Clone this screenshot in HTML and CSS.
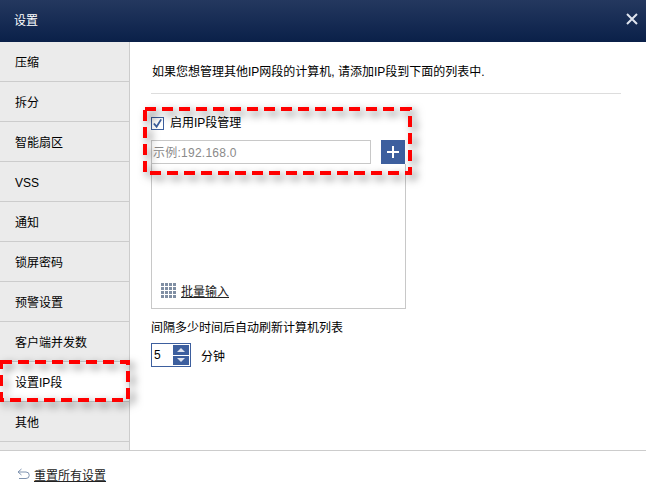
FILE: index.html
```html
<!DOCTYPE html>
<html lang="zh-CN">
<head>
<meta charset="UTF-8">
<title>设置</title>
<link rel="stylesheet" href="styles.css">
</head>
<body>
<div class="dialog">
    <header class="titlebar">
        <span class="title">设置</span>
        <svg class="close" width="12" height="12" viewBox="0 0 12 12"><path d="M1 1l10 10M11 1L1 11" stroke="#dfe4ee" stroke-width="2"/></svg>
    </header>
    <div class="middle">
        <ul class="sidebar">
            <li>压缩</li>
            <li>拆分</li>
            <li>智能扇区</li>
            <li>VSS</li>
            <li>通知</li>
            <li>锁屏密码</li>
            <li>预警设置</li>
            <li>客户端并发数</li>
            <li class="active">设置IP段</li>
            <li>其他</li>
        </ul>
        <main class="content">
            <p class="intro">如果您想管理其他IP网段的计算机, 请添加IP段到下面的列表中.</p>
            <label class="enable">
                <span class="checkbox">
                    <svg width="12" height="11" viewBox="0 0 12 11"><path d="M2 5.500l3 3.500 5-8" fill="none" stroke="#3d5f9e" stroke-width="2"/></svg>
                </span>
                <span class="enable-text">启用IP段管理</span>
            </label>
            <div class="add-row">
                <div class="ip-input">示例:192.168.0</div>
                <button class="add-btn">
                    <svg width="14" height="14" viewBox="0 0 14 14"><path d="M7 1v12M1 7h12" stroke="#fff" stroke-width="2"/></svg>
                </button>
            </div>
            <div class="ip-list">
                <div class="batch">
                    <svg width="15" height="15" viewBox="0 0 15 15" fill="#7f8ea3">
                        <path d="M0 0h3v3H0zM4 0h3v3H4zM8 0h3v3H8zM12 0h3v3h-3zM0 4h3v3H0zM4 4h3v3H4zM8 4h3v3H8zM12 4h3v3h-3zM0 8h3v3H0zM4 8h3v3H4zM8 8h3v3H8zM12 8h3v3h-3zM0 12h3v3H0zM4 12h3v3H4zM8 12h3v3H8zM12 12h3v3h-3z"/>
                    </svg>
                    <a>批量输入</a>
                </div>
            </div>
            <p class="interval">间隔多少时间后自动刷新计算机列表</p>
            <div class="spin-row">
                <div class="spin">
                    <span class="spin-value">5</span>
                    <div class="spin-btns">
                        <span class="spin-btn"><i class="arrow-up"></i></span>
                        <span class="spin-btn"><i class="arrow-down"></i></span>
                    </div>
                </div>
                <span>分钟</span>
            </div>
        </main>
    </div>
    <footer class="footer">
        <svg width="13" height="12" viewBox="0 0 13 12"><path d="M4.500 1L1 4l3.500 3M1 4h8a3 3 0 0 1 0 6.500H2" fill="none" stroke="#7f93b0" stroke-width="1"/></svg>
        <a>重置所有设置</a>
    </footer>
</div>

<svg class="mark mark-ip" width="280" height="78" viewBox="0 0 280 78"><rect x="2" y="2" width="265" height="64" fill="none" stroke="#f00" stroke-width="4" stroke-dasharray="11 6"/></svg>
<svg class="mark mark-nav" width="142" height="54" viewBox="0 0 142 54"><rect x="1" y="2" width="127" height="38" fill="none" stroke="#f00" stroke-width="4" stroke-dasharray="11 6"/></svg>
</body>
</html>
```

FILE: styles.css
```css
* {
    box-sizing: border-box;
}
html, body {
    margin: 0;
    padding: 0;
}
body {
    width: 646px;
    height: 496px;
    position: relative;
    overflow: hidden;
    background-color: #fff;
    color: #000;
    font-family: "Liberation Sans", "Noto Sans CJK SC", sans-serif;
    font-size: 12px;
}
.dialog {
    display: flex;
    flex-direction: column;
    height: 496px;
}
.titlebar {
    height: 42px;
    flex: none;
    display: flex;
    align-items: center;
    justify-content: space-between;
    padding: 0 8px 0 14px;
    color: #fff;
    background: linear-gradient(#24385f, #0a2049);
}
.title {
    margin-bottom: 3px;
}
.close {
    margin-bottom: 5px;
}
.middle {
    flex: 1;
    display: flex;
    min-height: 0;
}
.sidebar {
    width: 130px;
    flex: none;
    margin: 0;
    padding: 0;
    list-style: none;
    background-color: #ebebeb;
    border-right: 1px solid #ccc;
}
.sidebar li {
    height: 40px;
    padding-left: 15px;
    padding-top: 2px;
    line-height: 38px;
    border-bottom: 1px solid #ccc;
}
.sidebar li.active {
    background-color: #fff;
}
.content {
    flex: 1;
    padding: 0 25px 0 21px;
}
.intro {
    margin: 0;
    height: 52px;
    padding-top: 21px;
    text-indent: 1px;
    line-height: 18px;
    border-bottom: 1px solid #ddd;
}
.enable {
    display: flex;
    align-items: center;
    gap: 6px;
    margin-top: 19px;
    height: 20px;
}
.enable-text {
    margin-bottom: 3px;
}
.checkbox {
    width: 13px;
    height: 13px;
    border: 1px solid #3d5f9e;
    display: flex;
    align-items: center;
    justify-content: center;
}
.add-row {
    display: flex;
    gap: 10px;
    margin-top: 7px;
}
.ip-input {
    width: 220px;
    height: 24px;
    border: 1px solid #c8c8c8;
    line-height: 24px;
    padding-left: 1px;
    color: #8a8a8a;
    letter-spacing: 0.25px;
}
.add-btn {
    width: 24px;
    height: 24px;
    padding: 0;
    border: none;
    background-color: #3d5f9e;
    display: flex;
    align-items: center;
    justify-content: center;
}
.ip-list {
    width: 255px;
    height: 145px;
    border: 1px solid #c8c8c8;
    border-top: none;
    display: flex;
    align-items: flex-end;
    padding: 0 0 9px 9px;
}
.batch {
    display: flex;
    align-items: center;
    gap: 5px;
}
.batch a, .footer a {
    color: #222;
    text-decoration: underline;
}
.interval {
    margin: 10px 0 0;
    line-height: 18px;
}
.spin-row {
    display: flex;
    align-items: center;
    gap: 10px;
    margin-top: 6px;
}
.spin {
    width: 40px;
    height: 24px;
    border: 1px solid #3d5f9e;
    display: flex;
    justify-content: space-between;
    padding: 1px;
}
.spin-value {
    padding-left: 1px;
    line-height: 20px;
}
.spin-btns {
    width: 16px;
    display: flex;
    flex-direction: column;
    gap: 1px;
}
.spin-btn {
    flex: 1;
    background-color: #3d5f9e;
    display: flex;
    align-items: center;
    justify-content: center;
}
.arrow-up, .arrow-down {
    width: 0;
    height: 0;
    border-left: 4px solid transparent;
    border-right: 4px solid transparent;
}
.arrow-up {
    border-bottom: 4px solid #dfe4ee;
}
.arrow-down {
    border-top: 4px solid #dfe4ee;
}
.footer {
    height: 46px;
    flex: none;
    border-top: 1px solid #ccc;
    display: flex;
    align-items: center;
    gap: 4px;
    padding-left: 17px;
}
.footer a {
    margin-top: 2px;
}
/* red annotation frames over the screenshot */
.mark {
    position: absolute;
    filter: drop-shadow(4px 4px 4px rgba(0, 0, 0, 0.55));
}
.mark-ip {
    left: 143px;
    top: 107px;
}
.mark-nav {
    left: 0;
    top: 360px;
}
```
